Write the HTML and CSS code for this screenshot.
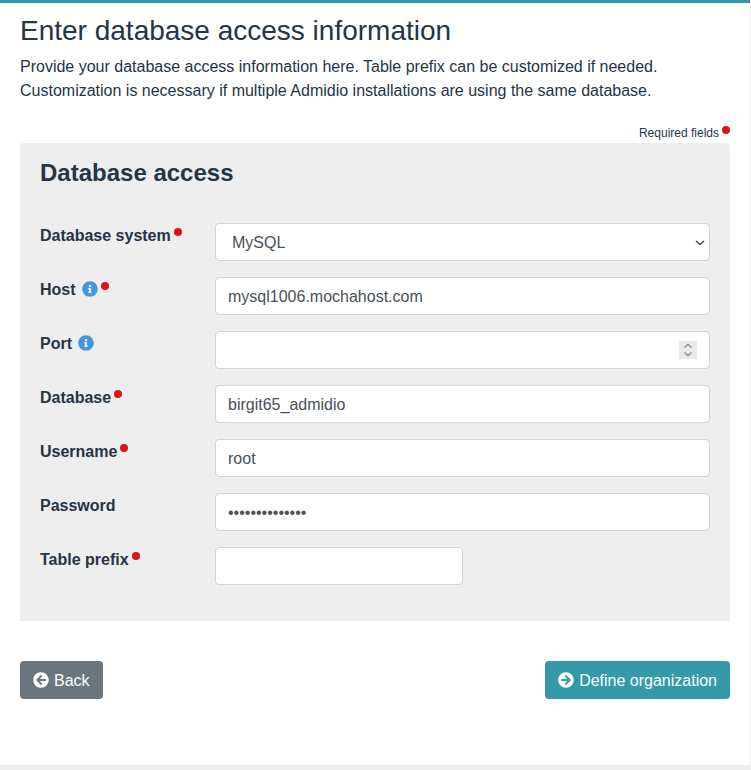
FILE: index.html
```html
<!DOCTYPE html>
<html lang="en">
<head>
<meta charset="utf-8">
<meta name="viewport" content="width=device-width, initial-scale=1">
<title>Enter database access information</title>
<link rel="stylesheet" href="styles.css">
</head>
<body>
<svg class="sprite" aria-hidden="true">
  <symbol id="info" viewBox="0 0 512 512"><path d="M256 8C119.043 8 8 119.083 8 256c0 136.997 111.043 248 248 248s248-111.003 248-248C504 119.083 392.957 8 256 8zm0 110c23.196 0 42 18.804 42 42s-18.804 42-42 42-42-18.804-42-42 18.804-42 42-42zm56 254c0 6.627-5.373 12-12 12h-88c-6.627 0-12-5.373-12-12v-24c0-6.627 5.373-12 12-12h12v-64h-12c-6.627 0-12-5.373-12-12v-24c0-6.627 5.373-12 12-12h64c6.627 0 12 5.373 12 12v100h12c6.627 0 12 5.373 12 12v24z"/></symbol>
  <symbol id="arrow-left" viewBox="0 0 512 512"><path d="M256 504C119 504 8 393 8 256S119 8 256 8s248 111 248 248-111 248-248 248zm28.9-143.6L209.4 288H392c13.3 0 24-10.7 24-24v-16c0-13.3-10.7-24-24-24H209.4l75.5-72.4c9.7-9.3 9.9-24.8.4-34.3l-11-10.9c-9.4-9.4-24.6-9.4-33.9 0L107.7 239c-9.4 9.4-9.4 24.6 0 33.9l132.7 132.7c9.4 9.4 24.6 9.4 33.9 0l11-10.9c9.5-9.5 9.3-25-.4-34.3z"/></symbol>
  <symbol id="arrow-right" viewBox="0 0 512 512"><path d="M256 8c137 0 248 111 248 248S393 504 256 504 8 393 8 256 119 8 256 8zm-28.900 143.600l75.500 72.400H120c-13.300 0-24 10.700-24 24v16c0 13.300 10.700 24 24 24h182.600l-75.500 72.400c-9.700 9.300-9.900 24.800-.4 34.300l11 10.900c9.400 9.400 24.600 9.400 33.900 0L404.300 273c9.400-9.400 9.400-24.600 0-33.900L271.600 106.300c-9.400-9.400-24.600-9.400-33.900 0l-11 10.900c-9.500 9.600-9.300 25.100.4 34.400z"/></symbol>
</svg>
<main class="page">
  <h1 class="title">Enter database access information</h1>
  <p class="intro">Provide your database access information here. Table prefix can be customized if needed. Customization is necessary if multiple Admidio installations are using the same database.</p>
  <form>
    <div class="required-note">Required fields<span class="dot"></span></div>
    <section class="panel">
      <h2 class="panel-title">Database access</h2>
      <div class="fields">
        <div class="field">
          <label class="label" for="system">Database system<span class="dot"></span></label>
          <div class="control">
            <select class="input select" id="system"><option>MySQL</option></select>
            <svg class="chevron" viewBox="0 0 10 6" aria-hidden="true"><path d="M1 1l4 3.500L9 1"/></svg>
          </div>
        </div>
        <div class="field">
          <label class="label" for="host">Host <svg class="icon info" aria-hidden="true"><use href="#info"/></svg><span class="dot"></span></label>
          <div class="control"><input class="input" id="host" type="text" value="mysql1006.mochahost.com"></div>
        </div>
        <div class="field">
          <label class="label" for="port">Port <svg class="icon info" aria-hidden="true"><use href="#info"/></svg></label>
          <div class="control">
            <input class="input" id="port" type="number">
            <svg class="spinner" viewBox="0 0 18 18" aria-hidden="true"><path d="M5.500 6.500L9 3.500l3.500 3M5.500 11.500l3.500 3 3.500-3"/></svg>
          </div>
        </div>
        <div class="field">
          <label class="label" for="database">Database<span class="dot"></span></label>
          <div class="control"><input class="input" id="database" type="text" value="birgit65_admidio"></div>
        </div>
        <div class="field">
          <label class="label" for="username">Username<span class="dot"></span></label>
          <div class="control"><input class="input" id="username" type="text" value="root"></div>
        </div>
        <div class="field">
          <label class="label" for="password">Password</label>
          <div class="control"><input class="input" id="password" type="password" value="abcdefghijklmn"></div>
        </div>
        <div class="field">
          <label class="label" for="prefix">Table prefix<span class="dot"></span></label>
          <div class="control"><input class="input half" id="prefix" type="text"></div>
        </div>
      </div>
    </section>
    <div class="actions">
      <button class="button back" type="button"><svg class="icon" aria-hidden="true"><use href="#arrow-left"/></svg>Back</button>
      <button class="button next" type="submit"><svg class="icon" aria-hidden="true"><use href="#arrow-right"/></svg>Define organization</button>
    </div>
  </form>
</main>
</body>
</html>
```
FILE: styles.css
```css
* {
  box-sizing: border-box;
}

body {
  margin: 0;
  background: #eeeeee;
  color: #263445;
  font: 16px/24px "Liberation Sans", Arial, sans-serif;
}

.sprite {
  display: none;
}

.page {
  margin-right: 1px;
  padding: 10px 20px 66px;
  border-top: 3px solid #349aaa;
  background: #fff;
}

.title {
  margin: 0 0 6px;
  font-size: 28px;
  font-weight: 400;
  line-height: 36px;
}

.intro {
  margin: 0 0 20px;
}

.required-note {
  display: flex;
  justify-content: flex-end;
  font-size: 12px;
  line-height: 20px;
}

.dot {
  display: inline-block;
  width: 8px;
  height: 8px;
  margin-left: 3px;
  border-radius: 50%;
  background: #dc1414;
}

.label .dot {
  vertical-align: 5px;
}

.required-note .dot {
  margin-top: 3px;
}

.panel {
  padding: 16px 20px 36px;
  border-radius: 4px 4px 0 0;
  background: #eeeeee;
}

.panel-title {
  margin: 0 0 36px;
  font-size: 24px;
  line-height: 28px;
}

.fields {
  display: grid;
  gap: 16px;
}

.field {
  display: grid;
  grid-template-columns: 175px 1fr;
}

.label {
  padding-top: 1px;
  font-weight: 700;
}

.control {
  position: relative;
}

.input {
  display: block;
  width: 100%;
  height: 38px;
  margin: 0;
  padding: 7px 12px 5px;
  border: 1px solid #ced4da;
  border-radius: 4px;
  background: #fff;
  color: #495057;
  font: inherit;
  appearance: none;
}

.input.half {
  width: 50%;
}

.select {
  padding-left: 16px;
}

input[type="number"] {
  appearance: textfield;
}

.chevron {
  position: absolute;
  top: 17px;
  right: 5px;
  width: 10px;
  height: 6px;
  fill: none;
  stroke: #40464d;
  stroke-width: 1.5;
  pointer-events: none;
}

.spinner {
  position: absolute;
  top: 10px;
  right: 13px;
  width: 18px;
  height: 18px;
  background: #e9e9ed;
  fill: none;
  stroke: #92929c;
  stroke-width: 1.5;
  pointer-events: none;
}

.icon {
  width: 16px;
  height: 16px;
  fill: currentColor;
}

.info {
  margin-left: 2px;
  color: #4496de;
  vertical-align: -2px;
}

.actions {
  display: flex;
  justify-content: space-between;
  margin-top: 40px;
}

.button {
  display: flex;
  align-items: flex-start;
  gap: 5px;
  height: 38px;
  padding: 8px 13px 6px;
  border: 0;
  border-radius: 4px;
  color: #fff;
  font: inherit;
}

.button .icon {
  margin-top: 3px;
}

.back {
  background: #6c757d;
}

.next {
  background: #349aaa;
}
```
